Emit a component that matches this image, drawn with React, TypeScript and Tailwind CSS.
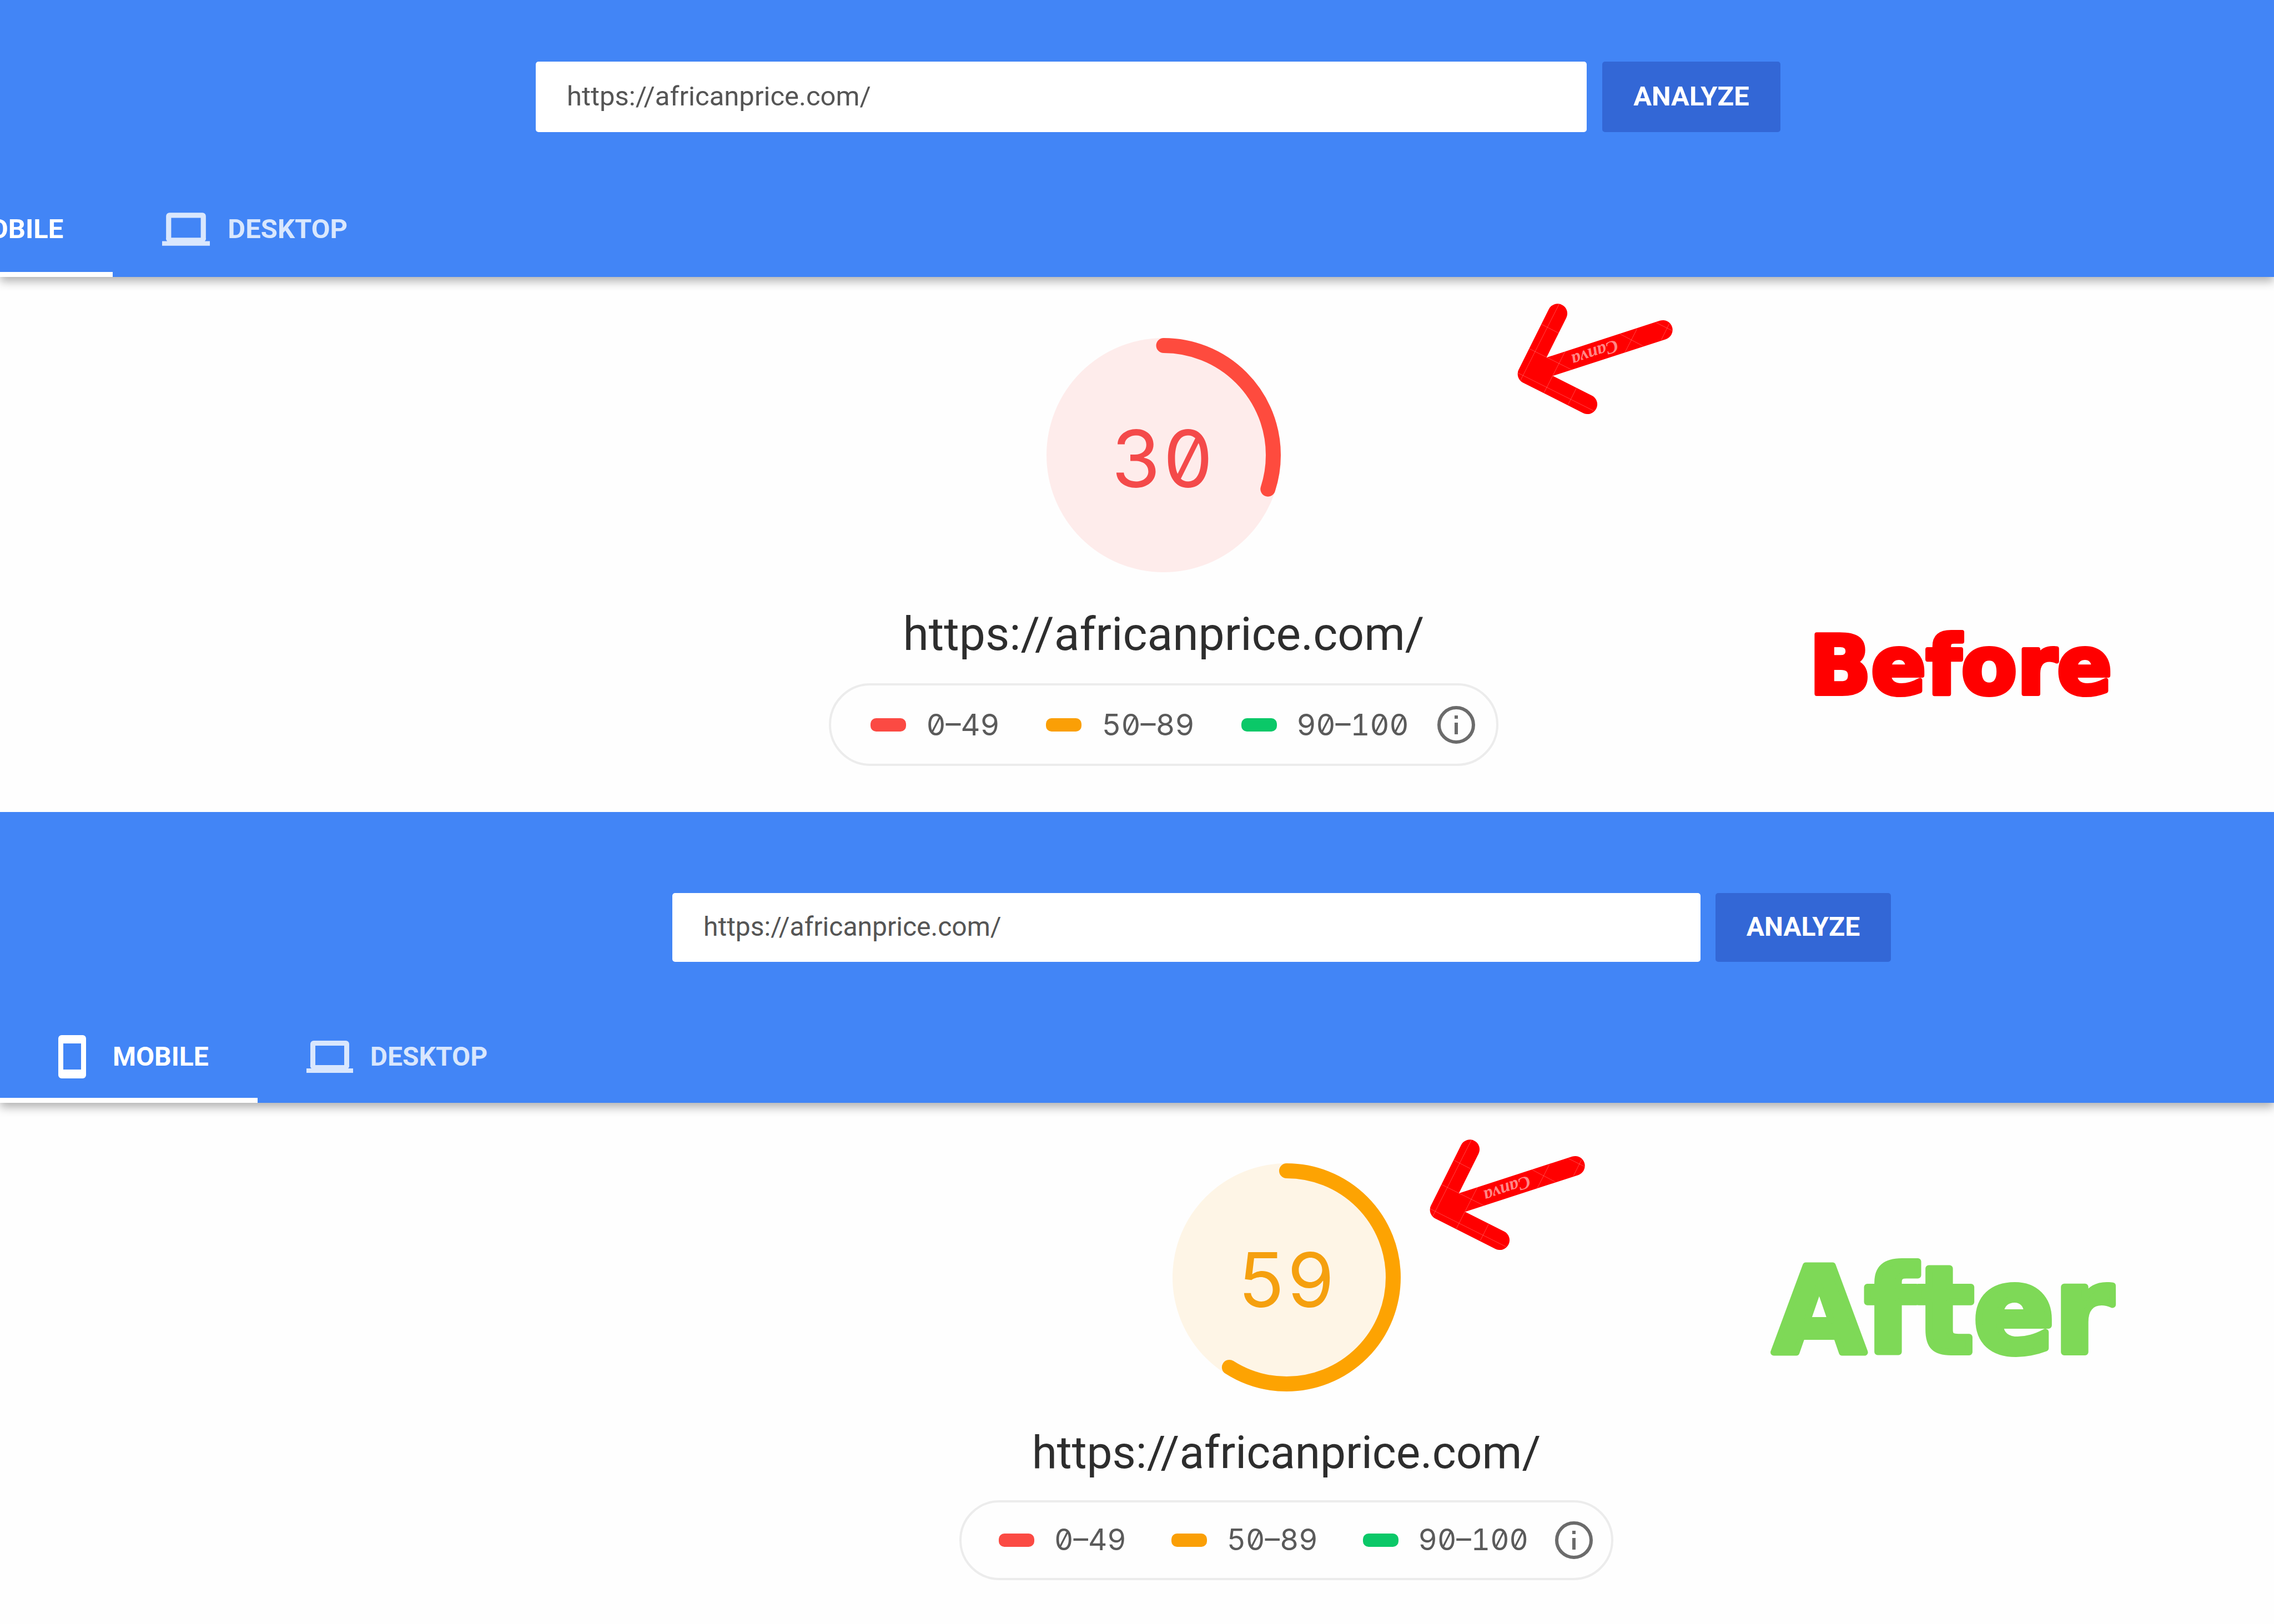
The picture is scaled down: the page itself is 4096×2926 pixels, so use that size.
import React from 'react';

type Sizes = {
  form: string;
  input: string;
  submit: string;
  header: string;
  nav: string;
  tab: string;
  icon: string;
  main: string;
  gauge: string;
  score: string;
  url: string;
  pill: string;
};

type Report = {
  id: string;
  score: number;
  color: string;
  tint: string;
  size: number;
  sizes: Sizes;
  arrow: string;
  caption: React.ReactNode;
};

const SITE = 'https://africanprice.com/';

const RANGES = [
  { label: '0–49', color: 'bg-[#fb4a43]' },
  { label: '50–89', color: 'bg-[#fa9f06]' },
  { label: '90–100', color: 'bg-[#0bc868]' },
];

function PhoneIcon({ className }: { className: string }) {
  return (
    <svg viewBox="0 0 84 80" className={className} aria-hidden="true">
      <path
        fillRule="evenodd"
        fill="#fff"
        d="M23 1h38a6 6 0 0 1 6 6v66a6 6 0 0 1-6 6H23a6 6 0 0 1-6-6V7a6 6 0 0 1 6-6Zm3 15v47h32V16Z"
      />
    </svg>
  );
}

function LaptopIcon({ className }: { className: string }) {
  return (
    <svg viewBox="0 0 84 80" className={className} aria-hidden="true">
      <path
        fillRule="evenodd"
        fill="#d9e7fd"
        d="M13 11h58a6 6 0 0 1 6 6v38a6 6 0 0 1-2 6h9v8H0v-8h9a6 6 0 0 1-2-6V17a6 6 0 0 1 6-6Zm3 9v35h52V20Z"
      />
    </svg>
  );
}

function Gauge({ score, color, tint, size, sizes }: Report) {
  const stroke = 27;
  const radius = (size - stroke) / 2;
  const length = 2 * Math.PI * radius;
  return (
    <div className={sizes.gauge}>
      <svg viewBox={`0 0 ${size} ${size}`} className="col-start-1 row-start-1 size-full" aria-hidden="true">
        <circle cx={size / 2} cy={size / 2} r={size / 2} fill={tint} />
        <circle
          cx={size / 2}
          cy={size / 2}
          r={radius}
          fill="none"
          stroke={color}
          strokeWidth={stroke}
          strokeLinecap="round"
          strokeDasharray={`${(length * score) / 100} ${length}`}
          transform={`rotate(-90 ${size / 2} ${size / 2})`}
        />
      </svg>
      <span className={sizes.score}>{score}</span>
    </div>
  );
}

function Arrow({ className }: { className: string }) {
  return (
    <svg viewBox="160 120 864 620" className={className} aria-hidden="true">
      <path
        d="M383 178 216 513 549 681M216 513 966 269"
        fill="none"
        stroke="#ff0000"
        strokeWidth="108"
        strokeLinecap="round"
        strokeLinejoin="round"
      />
      <path
        d="M392 125 178 548M163 507 585 718M295 238 390 287M225 372 458 488M425 388 308 617M487 592 441 683M823 263 757 392M728 291 856 358M928 228 1018 273M1002 234 957 325"
        stroke="#fff"
        strokeOpacity="0.4"
        strokeWidth="2"
      />
      <text
        transform="translate(706 322) rotate(161)"
        fill="#fff"
        fillOpacity="0.55"
        className="font-['Liberation_Serif',serif] text-[100px] font-bold italic"
      >
        Canva
      </text>
    </svg>
  );
}

function ReportPanel(report: Report) {
  const { sizes, id } = report;
  return (
    <section className="relative flex flex-col overflow-hidden bg-[#fefefe]">
      <header className={sizes.header}>
        <form className={sizes.form} onSubmit={(e) => e.preventDefault()}>
          <input
            id={`url-${id}`}
            type="text"
            aria-label="Web page URL"
            defaultValue={SITE}
            className={sizes.input}
          />
          <button type="submit" className={sizes.submit}>
            ANALYZE
          </button>
        </form>
        <nav className={sizes.nav}>
          <button type="button" className={`${sizes.tab} text-white shadow-[inset_0_-9px_0_#fff]`}>
            <PhoneIcon className={sizes.icon} />
            MOBILE
          </button>
          <button type="button" className={`${sizes.tab} text-[#d9e7fd]`}>
            <LaptopIcon className={sizes.icon} />
            DESKTOP
          </button>
        </nav>
      </header>
      <main className={sizes.main}>
        <Gauge {...report} />
        <h2 className={sizes.url}>{SITE}</h2>
        <div className={sizes.pill}>
          {RANGES.map((range) => (
            <div key={range.label} className="flex items-center gap-[36px]">
              <span className={`h-6 w-16 rounded-[10px] ${range.color}`} />
              <span>{range.label}</span>
            </div>
          ))}
          <button type="button" aria-label="About the score" className="-ml-[34px]">
            <svg viewBox="0 0 70 70" className="size-[70px]" aria-hidden="true">
              <circle cx="35" cy="35" r="31" fill="none" stroke="#6b6b6b" strokeWidth="6" />
              <path d="M35 31v21M35 18v6" stroke="#6b6b6b" strokeWidth="6" />
            </svg>
          </button>
        </div>
      </main>
      <Arrow className={report.arrow} />
      {report.caption}
    </section>
  );
}

const REPORTS: Report[] = [
  {
    id: 'before',
    score: 30,
    color: '#fe4b3e',
    tint: '#feeceb',
    size: 422,
    sizes: {
      header:
        'relative z-10 bg-[#4285f6] pt-[111px] shadow-[0_8px_16px_rgba(0,0,0,0.3)]',
      form: 'flex h-[127px] justify-center gap-[28px] pl-[76px]',
      input:
        'w-[1893px] rounded-[5px] bg-white px-[56px] pb-[2px] text-[49px] text-[#555] outline-none',
      submit: 'w-[321px] rounded-[5px] bg-[#3367d6] pb-[2px] text-[49px] font-bold text-white',
      nav: '-ml-[269px] mt-[88px] flex h-[173px]',
      tab: 'flex items-center gap-[32px] px-[89px] text-[49px] font-bold',
      icon: 'h-[82px] w-[86px]',
      main: 'flex flex-col items-center pl-[96px] pt-[110px]',
      gauge: 'grid size-[422px] place-items-center',
      score:
        "col-start-1 row-start-1 pt-[12px] pr-[4px] font-['Inter',sans-serif] text-[142px] leading-none text-[#f44a4a] slashed-zero tabular-nums",
      url: 'mt-[62px] text-[84px] leading-[100px] text-[#2d2d2d]',
      pill: "mt-[38px] flex h-[149px] items-center gap-[84px] rounded-full border-[4px] border-[#ececec] pl-[71px] pr-[37px] font-['Inter',sans-serif] text-[54px] text-[#5a5a5a] slashed-zero tabular-nums",
    },
    arrow: 'absolute left-[2733px] top-[546px] w-[281px]',
    caption: (
      <svg viewBox="0 0 600 260" className="absolute left-[3254px] top-[1060px] w-[600px]">
        <text
          x="5"
          y="190"
          fill="#ff0000"
          stroke="#ff0000"
          strokeWidth="8"
          strokeLinejoin="round"
          className="font-['DejaVu_Sans',sans-serif] text-[146px] font-bold"
        >
          Before
        </text>
      </svg>
    ),
  },
  {
    id: 'after',
    score: 59,
    color: '#fda302',
    tint: '#fef5e6',
    size: 411,
    sizes: {
      header:
        'relative z-10 bg-[#4285f6] pt-[146px] shadow-[0_8px_16px_rgba(0,0,0,0.3)]',
      form: 'flex h-[124px] justify-center gap-[27px] pl-[521px]',
      input:
        'w-[1852px] rounded-[5px] bg-white px-[56px] pb-[2px] text-[48px] text-[#555] outline-none',
      submit: 'w-[316px] rounded-[5px] bg-[#3367d6] pb-[2px] text-[48px] font-bold text-white',
      nav: 'mt-[88px] flex h-[166px]',
      tab: 'flex items-center gap-[31px] px-[88px] text-[48px] font-bold',
      icon: 'h-[80px] w-[84px]',
      main: 'flex flex-col items-center pl-[538px] pt-[109px]',
      gauge: 'grid size-[411px] place-items-center',
      score:
        "col-start-1 row-start-1 pt-[8px] font-['Inter',sans-serif] text-[136px] leading-none text-[#f5a00f] slashed-zero tabular-nums",
      url: 'mt-[61px] text-[82px] leading-[98px] text-[#2d2d2d]',
      pill: "mt-[37px] flex h-[144px] items-center gap-[81px] rounded-full border-[4px] border-[#ececec] pl-[67px] pr-[32px] font-['Inter',sans-serif] text-[53px] text-[#5a5a5a] slashed-zero tabular-nums",
    },
    arrow: 'absolute left-[2575px] top-[589px] w-[281px]',
    caption: (
      <svg viewBox="0 0 700 380" className="absolute left-[3180px] top-[683px] w-[700px]">
        <text
          x="14"
          y="290"
          fill="#7ed957"
          stroke="#7ed957"
          strokeWidth="12"
          strokeLinejoin="round"
          className="font-['DejaVu_Sans',sans-serif] text-[214px] font-bold"
        >
          After
        </text>
      </svg>
    ),
  },
];

export default function App() {
  return (
    <div className="grid min-h-screen grid-rows-2 font-['Roboto',sans-serif]">
      {REPORTS.map((report) => (
        <ReportPanel key={report.id} {...report} />
      ))}
    </div>
  );
}
